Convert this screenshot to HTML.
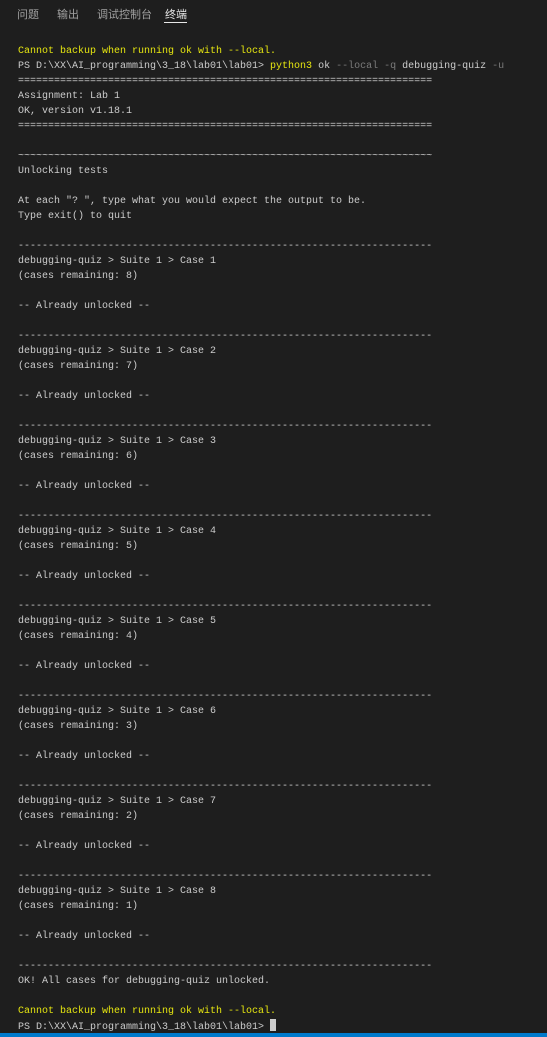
<!DOCTYPE html>
<html><head><meta charset="utf-8"><style>
html,body{margin:0;padding:0;background:#1e1e1e;width:547px;height:1037px;overflow:hidden;}
.tab{position:absolute;top:8px;font:11px "Liberation Sans","Noto Sans CJK SC",sans-serif;color:#a0a0a0;line-height:14px;}
.act{color:#e7e7e7;}
.ul{position:absolute;left:164px;top:22px;width:23px;height:1px;background:#e7e7e7;}
pre{position:absolute;left:18px;top:44px;margin:0;font:10px/15px "Liberation Mono",monospace;color:#cccccc;white-space:pre;}
.y{color:#e5e510;}
.d{color:#7a7a7a;}
.cur{display:inline-block;width:6px;height:12px;background:#cccccc;vertical-align:-2px;}
.bar{position:absolute;left:0;top:1033px;width:547px;height:4px;background:#007acc;}
</style></head><body>
<div class="tab" style="left:17px">问题</div>
<div class="tab" style="left:57px">输出</div>
<div class="tab" style="left:97px">调试控制台</div>
<div class="tab act" style="left:165px">终端</div>
<div class="ul"></div>
<pre><span class="y">Cannot backup when running ok with --local.</span>
PS D:\XX\AI_programming\3_18\lab01\lab01&gt; <span class="y">python3</span> ok <span class="d">--local -q</span> debugging-quiz <span class="d">-u</span>
=====================================================================
Assignment: Lab 1
OK, version v1.18.1
=====================================================================

~~~~~~~~~~~~~~~~~~~~~~~~~~~~~~~~~~~~~~~~~~~~~~~~~~~~~~~~~~~~~~~~~~~~~
Unlocking tests

At each "? ", type what you would expect the output to be.
Type exit() to quit

---------------------------------------------------------------------
debugging-quiz &gt; Suite 1 &gt; Case 1
(cases remaining: 8)

-- Already unlocked --

---------------------------------------------------------------------
debugging-quiz &gt; Suite 1 &gt; Case 2
(cases remaining: 7)

-- Already unlocked --

---------------------------------------------------------------------
debugging-quiz &gt; Suite 1 &gt; Case 3
(cases remaining: 6)

-- Already unlocked --

---------------------------------------------------------------------
debugging-quiz &gt; Suite 1 &gt; Case 4
(cases remaining: 5)

-- Already unlocked --

---------------------------------------------------------------------
debugging-quiz &gt; Suite 1 &gt; Case 5
(cases remaining: 4)

-- Already unlocked --

---------------------------------------------------------------------
debugging-quiz &gt; Suite 1 &gt; Case 6
(cases remaining: 3)

-- Already unlocked --

---------------------------------------------------------------------
debugging-quiz &gt; Suite 1 &gt; Case 7
(cases remaining: 2)

-- Already unlocked --

---------------------------------------------------------------------
debugging-quiz &gt; Suite 1 &gt; Case 8
(cases remaining: 1)

-- Already unlocked --

---------------------------------------------------------------------
OK! All cases for debugging-quiz unlocked.

<span class="y">Cannot backup when running ok with --local.</span>
PS D:\XX\AI_programming\3_18\lab01\lab01&gt; <span class="cur"></span></pre>
<div class="bar"></div>
</body></html>
